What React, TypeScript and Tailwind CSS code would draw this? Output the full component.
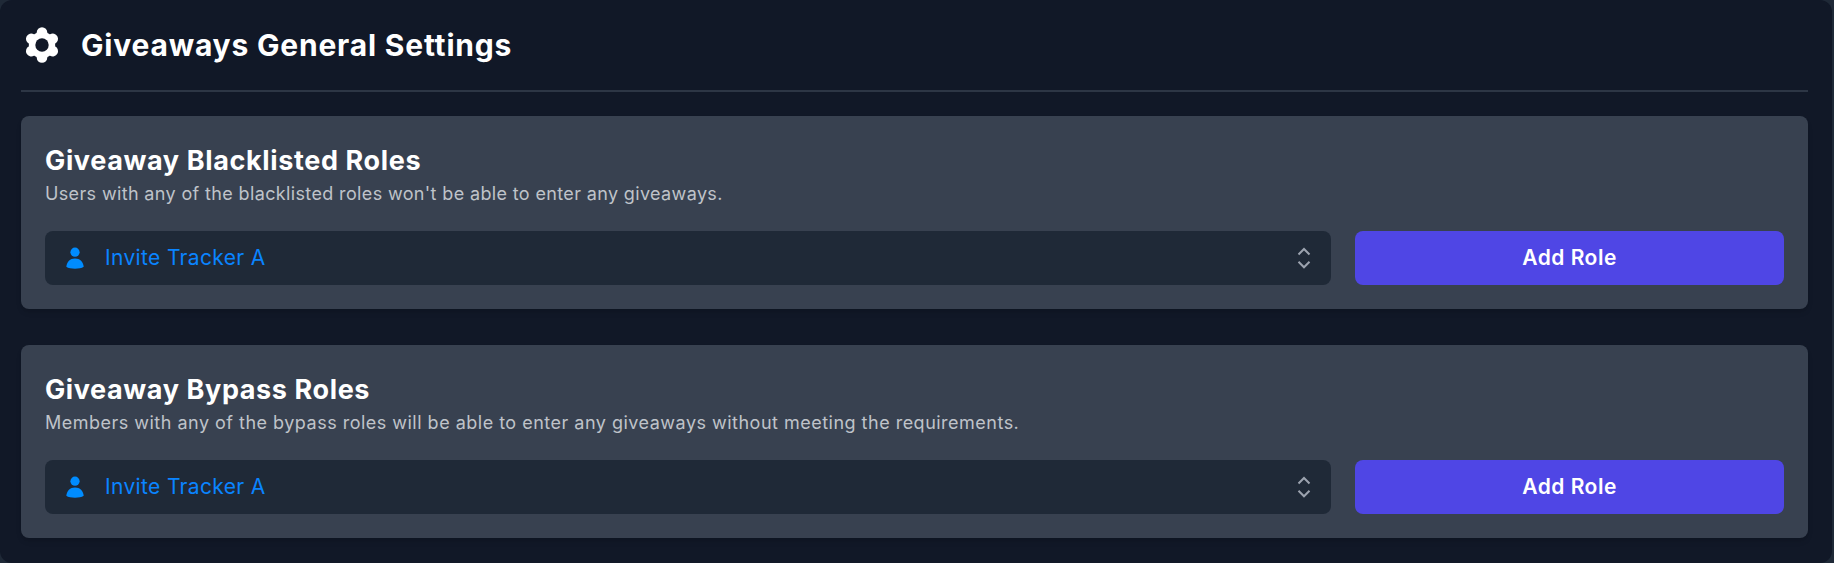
import React from "react";

function GearIcon() {
  return (
    <svg viewBox="0 0 36 36" className="h-9 w-9" fill="#fff">
      <defs>
        <mask id="gear-hole">
          <rect width="36" height="36" fill="#fff" />
          <circle cx="18" cy="18" r="6.7" fill="#000" />
        </mask>
      </defs>
      <g mask="url(#gear-hole)">
        <circle cx="18" cy="18" r="13.2" />
        {[0, 60, 120, 180, 240, 300].map((a) => (
          <circle key={a} cx="18" cy="5.6" r="5.3" transform={`rotate(${a} 18 18)`} />
        ))}
      </g>
    </svg>
  );
}

function PersonIcon() {
  return (
    <svg viewBox="0 0 18 22" className="h-[22px] w-[18px] shrink-0" fill="#008cff">
      <circle cx="9" cy="5.2" r="4.6" />
      <path d="M0.3 19.8C0.8 15 4 11.600 9 11.600s8.200 3.400 8.700 8.200C15.800 21.200 12.500 21.700 9 21.700S2.200 21.200 0.300 19.800Z" />
    </svg>
  );
}

function SelectorIcon() {
  return (
    <svg viewBox="0 0 14 22" className="h-[22px] w-[14px]" fill="none" stroke="#9ca3af" strokeWidth="2">
      <path d="M1.500 7.500L7 2l5.500 5.500M1.500 14.800l5.500 5.500 5.500-5.500" />
    </svg>
  );
}

interface RoleCardProps {
  title: string;
  description: string;
  titleClass: string;
  descriptionClass: string;
}

function RoleCard({ title, description, titleClass, descriptionClass }: RoleCardProps) {
  return (
    <section className="h-[193px] rounded-lg bg-[#384150] px-6 pt-[25px] shadow-md">
      <h2 className={`h-10 text-[27px] leading-10 font-bold whitespace-nowrap text-white ${titleClass}`}>{title}</h2>
      <p className={`h-6 text-[18px] leading-[26px] whitespace-nowrap text-[#bfc3c9] ${descriptionClass}`}>{description}</p>
      <div className="mt-[26px] flex gap-6">
        <div className="flex h-[54px] w-[1286px] items-center rounded-lg bg-[#1f2937] pr-5 pl-[21px]">
          <PersonIcon />
          <span className="ml-[21px] flex-1 text-[21px] leading-8 tracking-[0.35px] text-[#0a84ff]">Invite Tracker A</span>
          <SelectorIcon />
        </div>
        <button className="h-[54px] flex-1 rounded-lg bg-[#4f46e5] text-[21px] font-semibold tracking-[0.5px] text-white">
          Add Role
        </button>
      </div>
    </section>
  );
}

export default function App() {
  return (
    <div className="h-[563px] w-[1834px] overflow-hidden bg-[#1f2937] pr-[2px] font-['Inter',sans-serif]">
      <main className="h-[563px] rounded-xl bg-[#111827] pr-6 pl-[21px]">
        <header className="flex h-[92px] items-center border-b-2 border-[#2d3645] pl-[3px]">
          <GearIcon />
          <h1 className="ml-[21px] text-[30px] leading-10 font-bold tracking-[0.8px] whitespace-nowrap text-white">
            Giveaways General Settings
          </h1>
        </header>
        <div className="flex flex-col gap-9 pt-6">
          <RoleCard
            title="Giveaway Blacklisted Roles"
            description="Users with any of the blacklisted roles won't be able to enter any giveaways."
            titleClass="tracking-[0.63px]"
            descriptionClass="tracking-[0.36px]"
          />
          <RoleCard
            title="Giveaway Bypass Roles"
            description="Members with any of the bypass roles will be able to enter any giveaways without meeting the requirements."
            titleClass="tracking-[0.61px]"
            descriptionClass="tracking-[0.49px]"
          />
        </div>
      </main>
    </div>
  );
}
